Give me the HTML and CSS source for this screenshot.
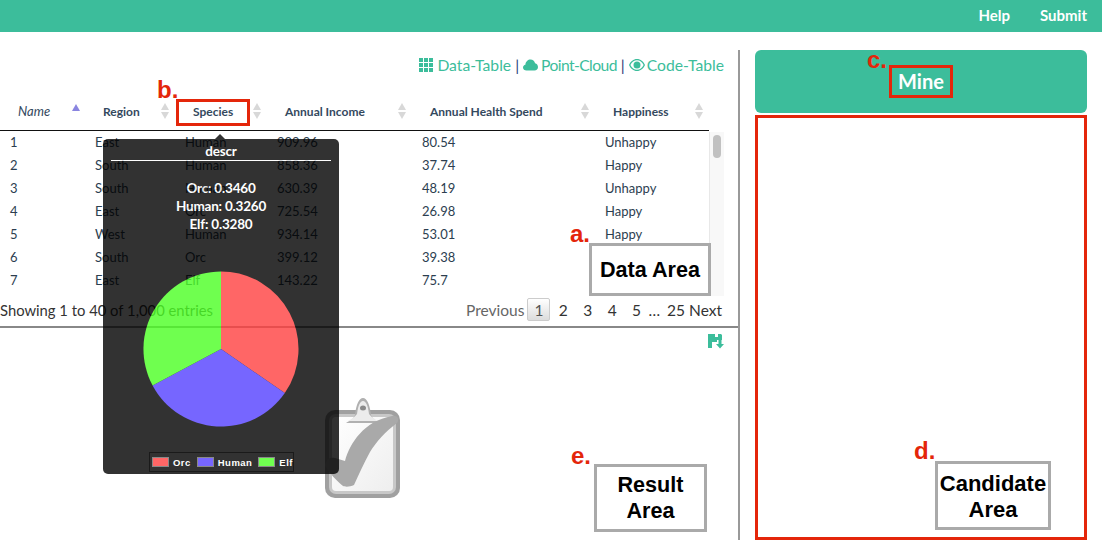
FILE: index.html
```html
<!DOCTYPE html>
<html lang="en">
<head>
  <meta charset="UTF-8" />
  <title>Data Mining</title>
  <link rel="stylesheet" href="styles.css">
</head>
<body>
  <div class="topbar">
    <a class="nav-link">Help</a>
    <a class="nav-link">Submit</a>
  </div>

  <div class="page">
    <div class="left">
      <div class="views">
        <svg class="view-icon" width="14" height="14" viewBox="0 0 14 14"><path d="M0 0h4v4H0zM5 0h4v4H5zM10 0h4v4h-4zM0 5h4v4H0zM5 5h4v4H5zM10 5h4v4h-4zM0 10h4v4H0zM5 10h4v4H5zM10 10h4v4h-4z"/></svg>
        <a>Data-Table</a> <span class="pipe">|</span>
        <svg class="view-icon cloud-icon" width="15" height="12" viewBox="0 0 15 12"><path d="M3.5 11.5C1.5 11.5 0 10.2 0 8.5 0 7 1 6 2.400 5.700 2.600 2.500 5 .5 7.500.5c2.300 0 4 1.400 4.600 3.700C13.800 4.600 15 6.200 15 8c0 2-1.500 3.500-3.500 3.500z"/></svg>
        <a class="view-tight">Point-Cloud</a> <span class="pipe">|</span>
        <svg class="view-icon eye-icon" width="16" height="12" viewBox="0 0 16 12"><path fill-rule="evenodd" d="M8 0c3.500 0 6.500 2.400 8 6-1.500 3.600-4.500 6-8 6S1.500 9.600 0 6c1.500-3.600 4.500-6 8-6zM8 1.200C5.200 1.200 2.800 3 1.400 6c1.400 3 3.800 4.800 6.600 4.800S13.200 9 14.600 6C13.200 3 10.800 1.200 8 1.200zM8 2.500a3.500 3.500 0 1 1 0 7 3.500 3.500 0 0 1 0-7z"/></svg>
        <a>Code-Table</a>
      </div>

      <table class="head-table">
        <colgroup><col class="c1"><col class="c2"><col class="c3"><col class="c4"><col class="c5"><col class="c6"></colgroup>
        <thead>
          <tr>
            <th class="name-col"><div class="th-in"><span>Name</span><span class="sort-up"></span></div></th>
            <th><div class="th-in"><span>Region</span><span class="sort"></span></div></th>
            <th><div class="th-in"><span>Species</span><span class="sort"></span></div></th>
            <th><div class="th-in"><span>Annual Income</span><span class="sort"></span></div></th>
            <th><div class="th-in"><span>Annual Health Spend</span><span class="sort"></span></div></th>
            <th><div class="th-in"><span>Happiness</span><span class="sort"></span></div></th>
          </tr>
        </thead>
      </table>

      <div class="body-wrap">
        <table class="body-table">
          <colgroup><col class="c1"><col class="c2"><col class="c3"><col class="c4"><col class="c5"><col class="c6"></colgroup>
          <tbody>
            <tr><td>1</td><td>East</td><td>Human</td><td>909.96</td><td>80.54</td><td>Unhappy</td></tr>
            <tr><td>2</td><td>South</td><td>Human</td><td>858.36</td><td>37.74</td><td>Happy</td></tr>
            <tr><td>3</td><td>South</td><td>Human</td><td>630.39</td><td>48.19</td><td>Unhappy</td></tr>
            <tr><td>4</td><td>East</td><td>Orc</td><td>725.54</td><td>26.98</td><td>Happy</td></tr>
            <tr><td>5</td><td>West</td><td>Human</td><td>934.14</td><td>53.01</td><td>Happy</td></tr>
            <tr><td>6</td><td>South</td><td>Orc</td><td>399.12</td><td>39.38</td><td>Happy</td></tr>
            <tr><td>7</td><td>East</td><td>Elf</td><td>143.22</td><td>75.7</td><td>Happy</td></tr>
          </tbody>
        </table>
        <div class="scrollbar"><div class="thumb"></div></div>
      </div>

      <div class="table-foot">
        <span class="showing">Showing 1 to 40 of 1,000 entries</span>
        <div class="pager">
          <a class="prev">Previous</a>
          <a class="page-no current">1</a>
          <a class="page-no">2</a>
          <a class="page-no">3</a>
          <a class="page-no">4</a>
          <a class="page-no">5</a>
          <span class="dots">…</span>
          <a class="page-last">25</a>
          <a class="next">Next</a>
        </div>
      </div>

      <div class="result">
        <svg class="save-icon" width="16" height="15" viewBox="0 0 16 15"><path d="M0 0h7v3h3V0h3l1 1v5H9v2H4v6H0z"/><path d="M10.500 6h3v4H16l-4 4.500L8 10h2.500z"/></svg>
        <svg class="clipboard" width="78" height="102" viewBox="0 0 78 102">
          <defs>
            <linearGradient id="paper" x1="0" y1="0" x2="1" y2="1">
              <stop offset="0" stop-color="#ffffff"/>
              <stop offset="1" stop-color="#eeeeee"/>
            </linearGradient>
          </defs>
          <rect x="1" y="13" width="75" height="88" rx="10" fill="#a0a0a0"/>
          <rect x="5" y="17" width="67" height="80" rx="7" fill="#c8c8c8"/>
          <rect x="8" y="20" width="61" height="74" rx="4" fill="url(#paper)"/>
          <path d="M22 26c3-2 7-3 9-8 1-10 4-17 8-17s7 7 8 17c2 5 6 6 10 8z" fill="#b0b0b0"/>
          <path d="M24 24c3-2 6-3 9-7 1-8 3-13 6-13s5 5 6 13c3 4 6 5 9 7z" fill="#ececec"/>
          <ellipse cx="39" cy="11" rx="3" ry="2.500" fill="#8a8a8a"/>
          <path d="M1 68C3 61 7 60 11 61L21 64C26 46 40 24 68 19 73 18 76 22 73 26 62 34 52 45 46 55 40 66 35 77 30 88 26 90 21 90 19 89 13 84 5 76 1 68z" fill="#a9a9a9"/>
        </svg>
      </div>
    </div>

    <div class="right">
      <div class="mine-bar"><span class="mine-label">Mine</span></div>
      <div class="candidates"></div>
    </div>

    <!-- annotations over the screenshot -->
    <div class="red-box species-box"></div>
    <span class="letter letter-a">a.</span>
    <span class="letter letter-b">b.</span>
    <span class="letter letter-c">c.</span>
    <span class="letter letter-d">d.</span>
    <span class="letter letter-e">e.</span>
    <div class="area-box data-area">Data Area</div>
    <div class="area-box result-area">Result<br>Area</div>
    <div class="area-box candidate-area">Candidate<br>Area</div>

    <div class="tip">
      <div class="tip-arrow"></div>
      <div class="tip-title">descr</div>
      <div class="tip-lines">
        <div>Orc: 0.3460</div>
        <div>Human: 0.3260</div>
        <div>Elf: 0.3280</div>
      </div>
      <svg class="pie" width="158" height="158" viewBox="0 0 158 158">
        <path d="M79 79V1.500A77.500 77.500 0 0 1 142.800 123z" fill="#ff4040"/>
        <path d="M79 79L142.800 123A77.500 77.500 0 0 1 10.600 115.500z" fill="#5540ff"/>
        <path d="M79 79L10.600 115.500A77.500 77.500 0 0 1 79 1.500z" fill="#4cff24"/>
      </svg>
    </div>
    <div class="legend">
      <span class="swatch swatch-orc"></span><span>Orc</span>
      <span class="swatch swatch-human"></span><span>Human</span>
      <span class="swatch swatch-elf"></span><span>Elf</span>
    </div>
  </div>
</body>
</html>
```

FILE: styles.css
```css
* {
  box-sizing: border-box;
}
body {
  margin: 0;
  background-color: #fff;
  color: #2c3e50;
  font-family: Lato, "Open Sans", sans-serif;
  overflow: hidden;
}
.topbar {
  height: 32px;
  background-color: #3cbd9b;
  display: flex;
  justify-content: flex-end;
  align-items: center;
  gap: 30px;
  padding: 0 15px 2px 0;
}
.nav-link {
  color: #fff;
  font-size: 15px;
  font-weight: 700;
}
.page {
  position: relative;
  display: flex;
  padding-top: 18px;
  height: 518px;
}

/* left column */
.left {
  width: 740px;
  height: 490px;
  border-right: 2px solid #999;
  display: flex;
  flex-direction: column;
}
.views {
  height: 30px;
  flex: none;
  padding: 0 14px 1px 0;
  display: flex;
  justify-content: flex-end;
  align-items: center;
  gap: 4px;
  font-size: 15.700px;
  color: #3cbd9b;
}
.view-tight {
  letter-spacing: -0.6px;
}
.view-icon {
  fill: #3cbd9b;
}
.cloud-icon {
  margin-right: -1px;
}
.eye-icon {
  margin-right: -2px;
}
.pipe {
  color: #2c3e7a;
}
table {
  border-collapse: collapse;
  table-layout: fixed;
  width: 709px;
}
.c1 { width: 85px; }
.c2 { width: 90px; }
.c3 { width: 92px; }
.c4 { width: 145px; }
.c5 { width: 183px; }
.c6 { width: 114px; }
.head-table {
  flex: none;
}
.head-table th {
  height: 50px;
  padding: 13px 5px 0 18px;
  border-bottom: 1px solid #111;
  font-size: 12px;
  font-weight: 700;
  text-align: left;
  color: #34495e;
}
.head-table .name-col {
  font-size: 13px;
  font-style: italic;
  font-weight: 400;
}
.th-in {
  display: flex;
  justify-content: space-between;
  align-items: center;
}
.sort {
  width: 9px;
  height: 16px;
  position: relative;
}
.sort::before,
.sort::after {
  content: "";
  position: absolute;
  left: 0;
  border-left: 4.500px solid transparent;
  border-right: 4.500px solid transparent;
}
.sort::before {
  top: 0;
  border-bottom: 7px solid #d8d8d8;
}
.sort::after {
  bottom: 0;
  border-top: 7px solid #d8d8d8;
}
.sort-up {
  width: 0;
  height: 0;
  margin-top: -8px;
  border-left: 4.500px solid transparent;
  border-right: 4.500px solid transparent;
  border-bottom: 7px solid #8a85e0;
}
.body-wrap {
  display: flex;
  flex: none;
  height: 165px;
  width: 724px;
  padding-top: 1px;
  overflow: hidden;
}
.body-table {
  height: 161px;
}
.body-table td {
  height: 23px;
  padding: 0 0 2px 10px;
  font-size: 13px;
}
.scrollbar {
  width: 15px;
  height: 164px;
  background-color: #f8f8f8;
  border-left: 1px solid #e8e8e8;
  padding: 3px 0 0 3px;
}
.thumb {
  width: 8px;
  height: 23px;
  background-color: #c1c1c1;
  border-radius: 4px;
}
.table-foot {
  height: 30px;
  flex: none;
  display: flex;
  justify-content: space-between;
  align-items: center;
  padding: 0 16px 2px 0;
  font-size: 15.500px;
  color: #333;
}
.showing {
  font-size: 14.800px;
}
.pager {
  display: flex;
  align-items: center;
}
.prev {
  color: #666;
  margin-right: 3px;
}
.page-no {
  width: 23px;
  height: 23px;
  margin-right: 1.400px;
  display: flex;
  justify-content: center;
  align-items: center;
}
.current {
  border: 1px solid #ccc;
  background: linear-gradient(#fff, #dcdcdc);
  border-radius: 2px;
  color: #555;
}
.dots {
  margin: 0 7px 0 -1px;
}
.page-last {
  margin-right: 4px;
}
.result {
  flex: 1;
  position: relative;
  border-top: 2px solid #888;
}
.save-icon {
  position: absolute;
  top: 6px;
  right: 14px;
  fill: #3cbd9b;
}
.clipboard {
  position: absolute;
  top: 69px;
  left: 324px;
}

/* right column */
.right {
  width: 332px;
  margin-left: 15px;
  display: flex;
  flex-direction: column;
  gap: 2px;
}
.mine-bar {
  height: 63px;
  background-color: #3cbd9b;
  border-radius: 6px;
  display: flex;
  justify-content: center;
  align-items: center;
}
.mine-label {
  width: 64px;
  height: 33px;
  border: 3px solid #e4260a;
  color: #fff;
  font-size: 20px;
  font-weight: 700;
  text-align: center;
  line-height: 27px;
}
.candidates {
  height: 425px;
  border: 3px solid #e4260a;
}

/* annotations */
.red-box {
  position: absolute;
  border: 3px solid #e4260a;
}
.species-box {
  left: 176px;
  top: 67px;
  width: 74px;
  height: 27px;
}
.letter {
  position: absolute;
  color: #e4260a;
  font-family: "Liberation Sans", Arial, sans-serif;
  font-size: 24px;
  font-weight: 700;
  line-height: 24px;
}
.letter-a { left: 570px; top: 190px; }
.letter-b { left: 157px; top: 46px; }
.letter-c { left: 867px; top: 16px; }
.letter-d { left: 914px; top: 407px; }
.letter-e { left: 571px; top: 412px; }
.area-box {
  position: absolute;
  border: 3px solid #aaa;
  background-color: #fff;
  color: #000;
  font-family: "Liberation Sans", Arial, sans-serif;
  font-size: 21.600px;
  font-weight: 700;
  line-height: 26px;
  text-align: center;
  display: flex;
  align-items: center;
  justify-content: center;
}
.data-area {
  left: 589px;
  top: 211px;
  width: 122px;
  height: 53px;
}
.result-area {
  left: 594px;
  top: 432px;
  width: 113px;
  height: 68px;
}
.candidate-area {
  left: 935px;
  top: 429px;
  width: 116px;
  height: 69px;
  padding-top: 2px;
  font-size: 22px;
}

/* tooltip */
.tip {
  position: absolute;
  left: 103px;
  top: 107px;
  width: 236px;
  height: 335px;
  background-color: #000;
  opacity: 0.8;
  border-radius: 5px;
  color: #fff;
  font-weight: 700;
  font-size: 13.500px;
  letter-spacing: -0.2px;
  text-align: center;
  display: flex;
  flex-direction: column;
  align-items: center;
}
.tip-arrow {
  position: absolute;
  left: 112px;
  top: -5px;
  border-left: 5px solid transparent;
  border-right: 5px solid transparent;
  border-bottom: 5px solid #000;
}
.tip-title {
  width: 220px;
  height: 22px;
  border-bottom: 1px solid #fff;
  line-height: 24px;
}
.tip-lines {
  margin-top: 18px;
  line-height: 18px;
}
.pie {
  margin-top: 37px;
  display: block;
}
.legend {
  position: absolute;
  left: 149px;
  top: 420px;
  width: 145px;
  height: 20px;
  border: 1px solid #1a1a1a;
  display: flex;
  align-items: center;
  gap: 4px;
  color: #fff;
  font-family: "Liberation Sans", Arial, sans-serif;
  font-size: 9.500px;
  font-weight: 700;
  letter-spacing: 0.5px;
}
.swatch {
  width: 17px;
  height: 10px;
  margin-left: 2px;
  border: 1px solid #888;
}
.swatch-orc { background-color: #ff6666; }
.swatch-human { background-color: #7766ff; }
.swatch-elf { background-color: #70ff50; }
```
